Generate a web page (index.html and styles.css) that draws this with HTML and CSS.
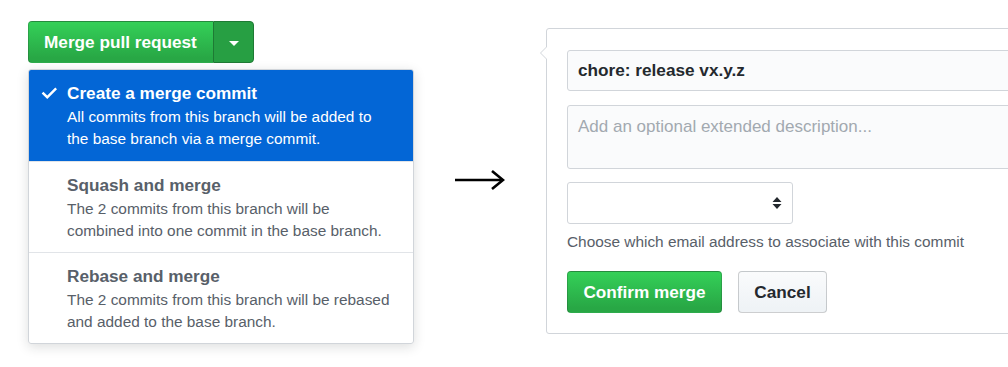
FILE: index.html
```html
<!DOCTYPE html>
<html lang="en">
<head>
  <meta charset="UTF-8" />
  <title>Merge pull request</title>
  <link rel="stylesheet" href="styles.css">
</head>
<body>

  <div class="left">
    <div class="btn-group">
      <button class="btn-merge">Merge pull request</button>
      <button class="btn-toggle"><span class="caret"></span></button>
    </div>

    <div class="menu">
      <div class="item selected">
        <svg class="check" width="16" height="16" viewBox="0 0 12 12"><path d="M12 3.2l-7.3 7.3L0.5 6.3l1.3-1.3 2.9 2.9 6-6z" fill="#fff"/></svg>
        <div class="title">Create a merge commit</div>
        <div class="desc">All commits from this branch will be added to the base branch via a merge commit.</div>
      </div>
      <div class="item">
        <div class="title">Squash and merge</div>
        <div class="desc">The 2 commits from this branch will be combined into one commit in the base branch.</div>
      </div>
      <div class="item">
        <div class="title">Rebase and merge</div>
        <div class="desc">The 2 commits from this branch will be rebased and added to the base branch.</div>
      </div>
    </div>
  </div>

  <div class="arrow">
    <svg width="50" height="22" viewBox="0 0 50 22">
      <path d="M0 11h46" stroke="#000" stroke-width="2.4"/>
      <path d="M37 2l11 9-11 9" fill="none" stroke="#000" stroke-width="2.6" stroke-linejoin="miter"/>
    </svg>
  </div>

  <div class="panel">
    <div class="field">chore: release vx.y.z</div>
    <div class="area">Add an optional extended description...</div>
    <div class="select">
      <svg width="10" height="14" viewBox="0 0 10 14"><path d="M5 1l4.5 5h-9zM5 13L0.5 8h9z" fill="#24292e"/></svg>
    </div>
    <p class="note">Choose which email address to associate with this commit</p>
    <div class="actions">
      <button class="btn-confirm">Confirm merge</button>
      <button class="btn-cancel">Cancel</button>
    </div>
  </div>

</body>
</html>
```

FILE: styles.css
```css
* {
  margin: 0;
  padding: 0;
  box-sizing: border-box;
}

html, body {
  height: 100%;
  font-family: 'Liberation Sans', Arial, sans-serif;
  background-color: #fff;
  color: #24292e;
}

body {
  display: flex;
  align-items: flex-start;
  overflow: hidden;
}

button {
  font-family: inherit;
  font-size: 17.2px;
  font-weight: bold;
  cursor: pointer;
}

/* left side: merge button + menu */
.left {
  width: 414px;
  flex-shrink: 0;
  padding: 21px 0 0 28px;
}

.btn-group {
  display: flex;
  height: 42px;
}

.btn-merge {
  width: 185px;
  color: #fff;
  text-align: left;
  padding: 0 15px;
  background-image: linear-gradient(-180deg, #34d058 0%, #28a745 90%);
  border: 1px solid rgba(27, 31, 35, 0.2);
  border-right: 0;
  border-radius: 4px 0 0 4px;
}

.btn-toggle {
  width: 41px;
  background-color: #279f43;
  border: 1px solid #1e7a34;
  border-radius: 0 4px 4px 0;
  display: flex;
  align-items: center;
  justify-content: center;
}

.caret {
  border-top: 5px solid #fff;
  border-left: 5px solid transparent;
  border-right: 5px solid transparent;
  margin-top: 2px;
}

.menu {
  margin-top: 6px;
  width: 386px;
  border: 1px solid #d1d5da;
  border-radius: 3px;
  box-shadow: 0 3px 12px rgba(27, 31, 35, 0.15);
  overflow: hidden;
}

.item {
  position: relative;
  padding: 12px 18px 10px 38px;
  color: #586069;
}

.item + .item {
  border-top: 1px solid #e1e4e8;
}

.item.selected {
  background-color: #0366d6;
  color: #fff;
  padding-bottom: 11px;
}

.check {
  position: absolute;
  left: 12px;
  top: 15px;
}

.title {
  font-size: 17.2px;
  font-weight: bold;
  line-height: 22px;
  margin-bottom: 2px;
}

.desc {
  font-size: 15.4px;
  line-height: 22px;
}

/* arrow between the two */
.arrow {
  width: 132px;
  flex-shrink: 0;
  padding: 169px 0 0 41px;
}

/* right side: merge form */
.panel {
  position: relative;
  margin-top: 28px;
  width: 500px;
  flex-shrink: 0;
  border: 1px solid #d1d5da;
  border-radius: 3px;
  padding: 21px 20px 20px 20px;
}

.panel::before,
.panel::after {
  content: "";
  position: absolute;
  top: 17px;
  border-top: 7px solid transparent;
  border-bottom: 7px solid transparent;
}

.panel::before {
  left: -7px;
  border-right: 7px solid #d1d5da;
}

.panel::after {
  left: -6px;
  border-right: 7px solid #fff;
}

.field,
.area {
  background-color: #fafbfc;
  border: 1px solid #d1d5da;
  border-radius: 3px;
  padding: 0 10px;
}

.field {
  height: 41px;
  line-height: 39px;
  font-size: 17.2px;
  font-weight: bold;
  color: #24292e;
}

.area {
  margin-top: 14px;
  height: 64px;
  padding-top: 10px;
  line-height: 22px;
  font-size: 17px;
  color: #a2a9b0;
}

.select {
  margin-top: 13px;
  width: 226px;
  height: 42px;
  border: 1px solid #d1d5da;
  border-radius: 3px;
  display: flex;
  align-items: center;
  justify-content: flex-end;
  padding-right: 10px;
}

.note {
  font-size: 15.4px;
  color: #586069;
  margin-top: 8px;
  line-height: 20px;
}

.actions {
  display: flex;
  gap: 16px;
  margin-top: 19px;
}

.actions button {
  height: 42px;
  border-radius: 4px;
  border: 1px solid rgba(27, 31, 35, 0.2);
}

.btn-confirm {
  width: 155px;
  color: #fff;
  background-image: linear-gradient(-180deg, #34d058 0%, #28a745 90%);
}

.btn-cancel {
  width: 89px;
  color: #24292e;
  background-image: linear-gradient(-180deg, #fafbfc 0%, #eff3f6 90%);
}
```
